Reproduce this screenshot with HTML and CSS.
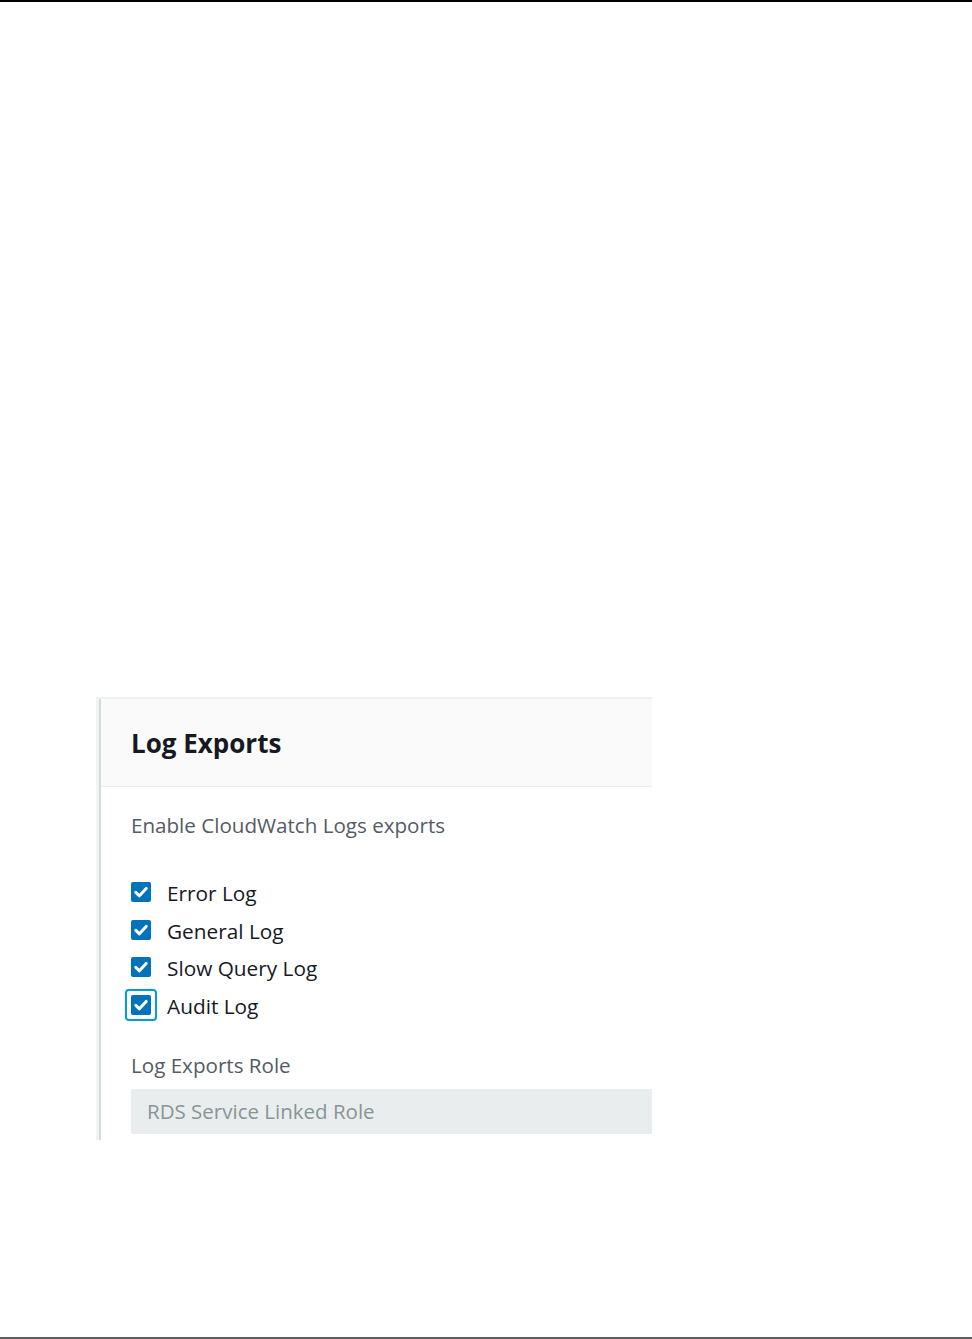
FILE: index.html
```html
<!DOCTYPE html>
<html lang="en">
<head>
<meta charset="utf-8">
<title>Log Exports</title>
<link rel="stylesheet" href="styles.css">
</head>
<body>
<div class="rule-top"></div>
<main class="stage">
  <section class="panel">
    <div class="panel-inner">
      <header class="panel-header">
        <h2 class="panel-title">Log Exports</h2>
      </header>
      <div class="panel-body">
        <div class="field-label">Enable CloudWatch Logs exports</div>
        <ul class="checks">
          <li class="check-row"><span class="box"><svg viewBox="0 0 20 20" class="tick"><path d="M4.8 10.4 L8.4 13.8 L15.2 6.4"/></svg></span><span class="check-label">Error Log</span></li>
          <li class="check-row"><span class="box"><svg viewBox="0 0 20 20" class="tick"><path d="M4.8 10.4 L8.4 13.8 L15.2 6.4"/></svg></span><span class="check-label">General Log</span></li>
          <li class="check-row"><span class="box"><svg viewBox="0 0 20 20" class="tick"><path d="M4.8 10.4 L8.4 13.8 L15.2 6.4"/></svg></span><span class="check-label">Slow Query Log</span></li>
          <li class="check-row"><span class="box focused"><svg viewBox="0 0 20 20" class="tick"><path d="M4.8 10.4 L8.4 13.8 L15.2 6.4"/></svg></span><span class="check-label">Audit Log</span></li>
        </ul>
        <div class="field-label role-label">Log Exports Role</div>
        <div class="input-disabled">RDS Service Linked Role</div>
      </div>
    </div>
  </section>
</main>
<div class="spacer"></div>
<div class="rule-bottom"></div>
</body>
</html>
```

FILE: styles.css
```css
html, body {
  margin: 0;
  padding: 0;
  background: #ffffff;
}
body {
  display: flex;
  flex-direction: column;
  min-height: 1339px;
  font-family: "Open Sans", "Noto Sans", "Liberation Sans", sans-serif;
  color: #16191f;
}
.rule-top {
  height: 2px;
  background: #000000;
}
.rule-bottom {
  height: 2px;
  background: #5f5f5f;
}
.spacer {
  flex: 1;
}
.stage {
  margin-top: 695px;
  padding-left: 96px;
}
.panel {
  width: 556px;
  border-top: 2px solid #eef0f0;
  border-left: 3px solid #f2f3f3;
  box-sizing: border-box;
}
.panel-inner {
  border-left: 2px solid #d5dbdb;
}
.panel-header {
  height: 87px;
  background: #fafafa;
  border-bottom: 1px solid #eaeded;
  display: flex;
  align-items: center;
  padding-left: 30px;
}
.panel-title {
  margin: 0;
  font-size: 26px;
  font-weight: 700;
  line-height: 30px;
  color: #16191f;
  padding-top: 1px;
}
.panel-body {
  padding: 25px 0 6px 30px;
}
.field-label {
  font-size: 20.6px;
  line-height: 26px;
  color: #545b64;
}
.checks {
  list-style: none;
  margin: 36px 0 0 0;
  padding: 0;
}
.check-row {
  height: 37.7px;
  display: flex;
  align-items: center;
}
.box {
  width: 20px;
  height: 20px;
  border-radius: 2px;
  background: #0073bb;
  display: flex;
  align-items: center;
  justify-content: center;
  position: relative;
  flex: none;
  margin-top: -2px;
}
.box.focused::after {
  content: "";
  position: absolute;
  left: -6px;
  top: -6px;
  right: -6px;
  bottom: -6px;
  border: 2px solid #00a1c9;
  border-radius: 4px;
}
.tick {
  width: 20px;
  height: 20px;
  fill: none;
  stroke: #ffffff;
  stroke-width: 3;
  stroke-linecap: round;
  stroke-linejoin: round;
}
.check-label {
  margin-left: 16px;
  font-size: 20.8px;
  line-height: 26px;
  color: #16191f;
}
.role-label {
  margin-top: 27px;
}
.input-disabled {
  margin-top: 11px;
  height: 45px;
  background: #eaeded;
  border-radius: 2px 0 0 2px;
  display: flex;
  align-items: center;
  padding-left: 16px;
  font-size: 20.5px;
  color: #879596;
}
```
